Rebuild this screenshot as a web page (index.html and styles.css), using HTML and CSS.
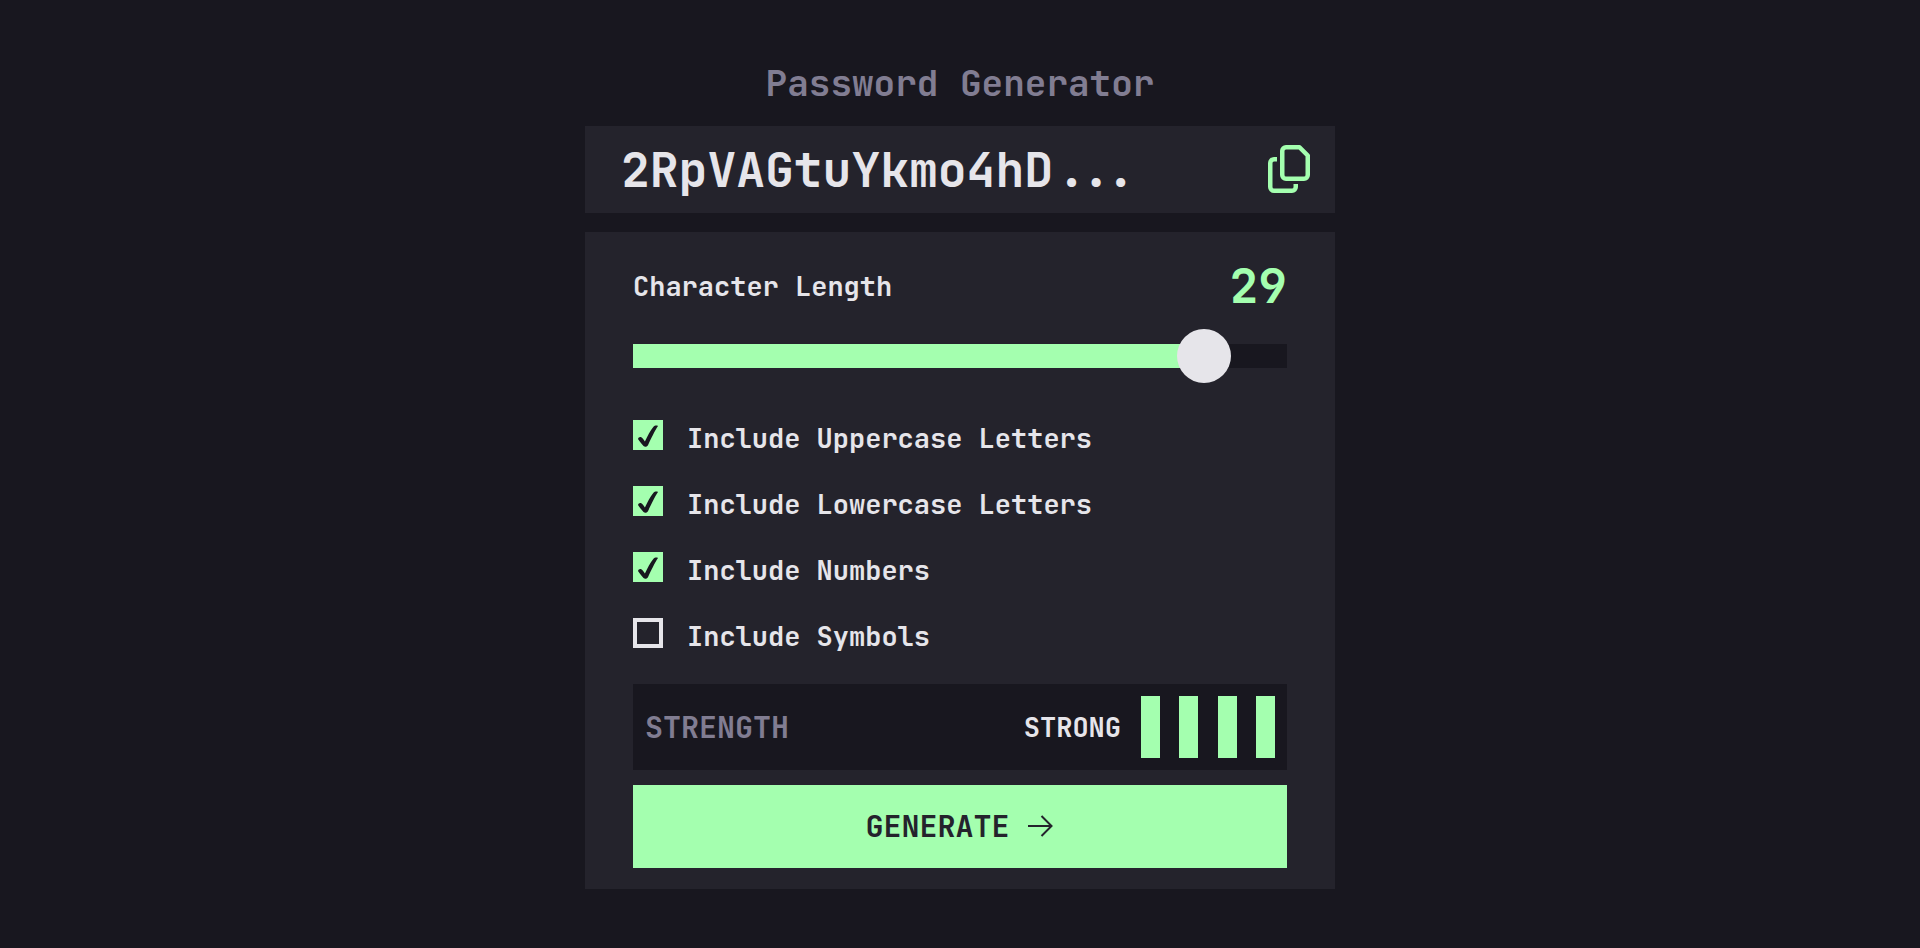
FILE: index.html
```html
<!DOCTYPE html>
<html lang="en">
<head>
<meta charset="utf-8">
<meta name="viewport" content="width=device-width, initial-scale=1">
<title>Password Generator</title>
<link rel="stylesheet" href="styles.css">
</head>
<body>
<main class="generator">
  <h1 class="title">Password Generator</h1>

  <section class="card result">
    <output class="password" for="length upper lower numbers symbols">2RpVAGtuYkmo4hD...</output>
    <button class="copy" type="button" aria-label="Copy password">
      <svg width="42" height="48" viewBox="0 0 42 48" fill="none" stroke="currentColor" stroke-width="4.500" stroke-linejoin="round" aria-hidden="true">
        <path d="M18 2.250H31.500L39.750 10.500V30a3.750 3.750 0 0 1-3.750 3.750H18a3.750 3.750 0 0 1-3.750-3.750V6a3.750 3.750 0 0 1 3.750-3.750Z"/>
        <path d="M9 14.250H6a3.750 3.750 0 0 0-3.750 3.750V42a3.750 3.750 0 0 0 3.750 3.750H24a3.750 3.750 0 0 0 3.750-3.750V39"/>
      </svg>
    </button>
  </section>

  <form class="card settings">
    <div class="length">
      <label for="length">Character Length</label>
      <output class="count" for="length">29</output>
    </div>
    <input class="slider" id="length" type="range" min="0" max="32" value="29" style="--fill: 90.6%">

    <div class="options">
      <div class="option">
        <span class="tick"><input type="checkbox" id="upper" checked><svg class="mark" width="30" height="30" viewBox="0 0 30 30" aria-hidden="true"><path d="M5 19C5.300 17.500 6.800 16.400 8.300 17.200C9.600 18 10.800 19.600 11.900 21.400C14.500 16 17.300 10.600 20.300 7C21.600 5.600 23.300 5.300 25 5.900C22 10.200 17.800 19 15.200 24.700C14 27 12 27.300 10.500 26C8.500 24 6.500 21 5 19Z"/></svg></span>
        <label for="upper">Include Uppercase Letters</label>
      </div>
      <div class="option">
        <span class="tick"><input type="checkbox" id="lower" checked><svg class="mark" width="30" height="30" viewBox="0 0 30 30" aria-hidden="true"><path d="M5 19C5.300 17.500 6.800 16.400 8.300 17.200C9.600 18 10.800 19.600 11.900 21.400C14.500 16 17.300 10.600 20.300 7C21.600 5.600 23.300 5.300 25 5.900C22 10.200 17.800 19 15.200 24.700C14 27 12 27.300 10.500 26C8.500 24 6.500 21 5 19Z"/></svg></span>
        <label for="lower">Include Lowercase Letters</label>
      </div>
      <div class="option">
        <span class="tick"><input type="checkbox" id="numbers" checked><svg class="mark" width="30" height="30" viewBox="0 0 30 30" aria-hidden="true"><path d="M5 19C5.300 17.500 6.800 16.400 8.300 17.200C9.600 18 10.800 19.600 11.900 21.400C14.500 16 17.300 10.600 20.300 7C21.600 5.600 23.300 5.300 25 5.900C22 10.200 17.800 19 15.200 24.700C14 27 12 27.300 10.500 26C8.500 24 6.500 21 5 19Z"/></svg></span>
        <label for="numbers">Include Numbers</label>
      </div>
      <div class="option">
        <span class="tick"><input type="checkbox" id="symbols"><svg class="mark" width="30" height="30" viewBox="0 0 30 30" aria-hidden="true"><path d="M5 19C5.300 17.500 6.800 16.400 8.300 17.200C9.600 18 10.800 19.600 11.900 21.400C14.500 16 17.300 10.600 20.300 7C21.600 5.600 23.300 5.300 25 5.900C22 10.200 17.800 19 15.200 24.700C14 27 12 27.300 10.500 26C8.500 24 6.500 21 5 19Z"/></svg></span>
        <label for="symbols">Include Symbols</label>
      </div>
    </div>

    <div class="strength">
      <span class="strength-name">STRENGTH</span>
      <span class="level">STRONG</span>
      <div class="bars" aria-hidden="true"><i></i><i></i><i></i><i></i></div>
    </div>

    <button class="generate" type="button">
      GENERATE
      <svg width="25" height="22" viewBox="0 0 25 22" fill="none" stroke="currentColor" stroke-width="2" aria-hidden="true"><path d="M0 11H23.500M13.500 1L23.500 11L13.500 21"/></svg>
    </button>
  </form>
</main>
</body>
</html>
```
FILE: styles.css
```css
:root {
  --page: #18171f;
  --card: #24232c;
  --green: #a4ffaf;
  --light: #e6e5ea;
  --muted: #817d92;
}

* { box-sizing: border-box; }

body {
  margin: 0;
  min-height: 100vh;
  padding: 59px 24px;
  background: var(--page);
  color: var(--light);
  font: 700 27px/36px "JetBrains Mono", "DejaVu Sans Mono", monospace;
}

.generator {
  max-width: 750px;
  margin: 0 auto;
}

.title {
  margin: 0 0 19px;
  color: var(--muted);
  font-size: 36px;
  line-height: 48px;
  text-align: center;
}

.card { background: var(--card); }

.result {
  display: flex;
  align-items: center;
  justify-content: space-between;
  padding: 12px 25px 12px 36px;
  margin-bottom: 19px;
}

.password {
  font-size: 48px;
  line-height: 63px;
}

.copy {
  display: flex;
  padding: 0 0 2px;
  border: 0;
  background: none;
  color: var(--green);
  cursor: pointer;
}

.settings { padding: 24px 48px 21px; }

.length {
  display: flex;
  align-items: center;
  justify-content: space-between;
  margin-bottom: 14px;
}

.count {
  color: var(--green);
  font-size: 48px;
  line-height: 59px;
}

.slider {
  appearance: none;
  display: block;
  width: 100%;
  height: 54px;
  margin: 0 0 37px;
  background: none;
  cursor: pointer;
}

.slider::-webkit-slider-runnable-track {
  height: 24px;
  background: linear-gradient(to right, var(--green) var(--fill), var(--page) var(--fill));
}

.slider::-webkit-slider-thumb {
  appearance: none;
  width: 54px;
  height: 54px;
  margin-top: -15px;
  border-radius: 50%;
  background: var(--light);
}

.options {
  display: grid;
  gap: 30px;
  margin-bottom: 30px;
}

.option {
  display: flex;
  align-items: flex-start;
  gap: 24px;
}

.tick { display: grid; }

.tick input,
.mark { grid-area: 1 / 1; }

.tick input {
  appearance: none;
  width: 30px;
  height: 30px;
  margin: 0;
  border: 4px solid var(--light);
}

.tick input:checked {
  border-color: var(--green);
  background: var(--green);
}

.mark {
  visibility: hidden;
  fill: var(--page);
  pointer-events: none;
}

.tick input:checked + .mark { visibility: visible; }

.strength {
  display: flex;
  align-items: center;
  padding: 12px;
  margin-bottom: 15px;
  background: var(--page);
}

.strength-name {
  margin-right: auto;
  color: var(--muted);
  font-size: 30px;
}

.bars {
  display: flex;
  justify-content: space-between;
  width: 134px;
  height: 62px;
  margin-left: 20px;
}

.bars i {
  width: 19px;
  background: var(--green);
}

.generate {
  display: flex;
  align-items: center;
  justify-content: center;
  gap: 18px;
  width: 100%;
  height: 83px;
  padding: 0 2px 2px 0;
  border: 0;
  background: var(--green);
  color: var(--card);
  font: inherit;
  font-size: 30px;
  font-weight: 600;
  cursor: pointer;
}
```
